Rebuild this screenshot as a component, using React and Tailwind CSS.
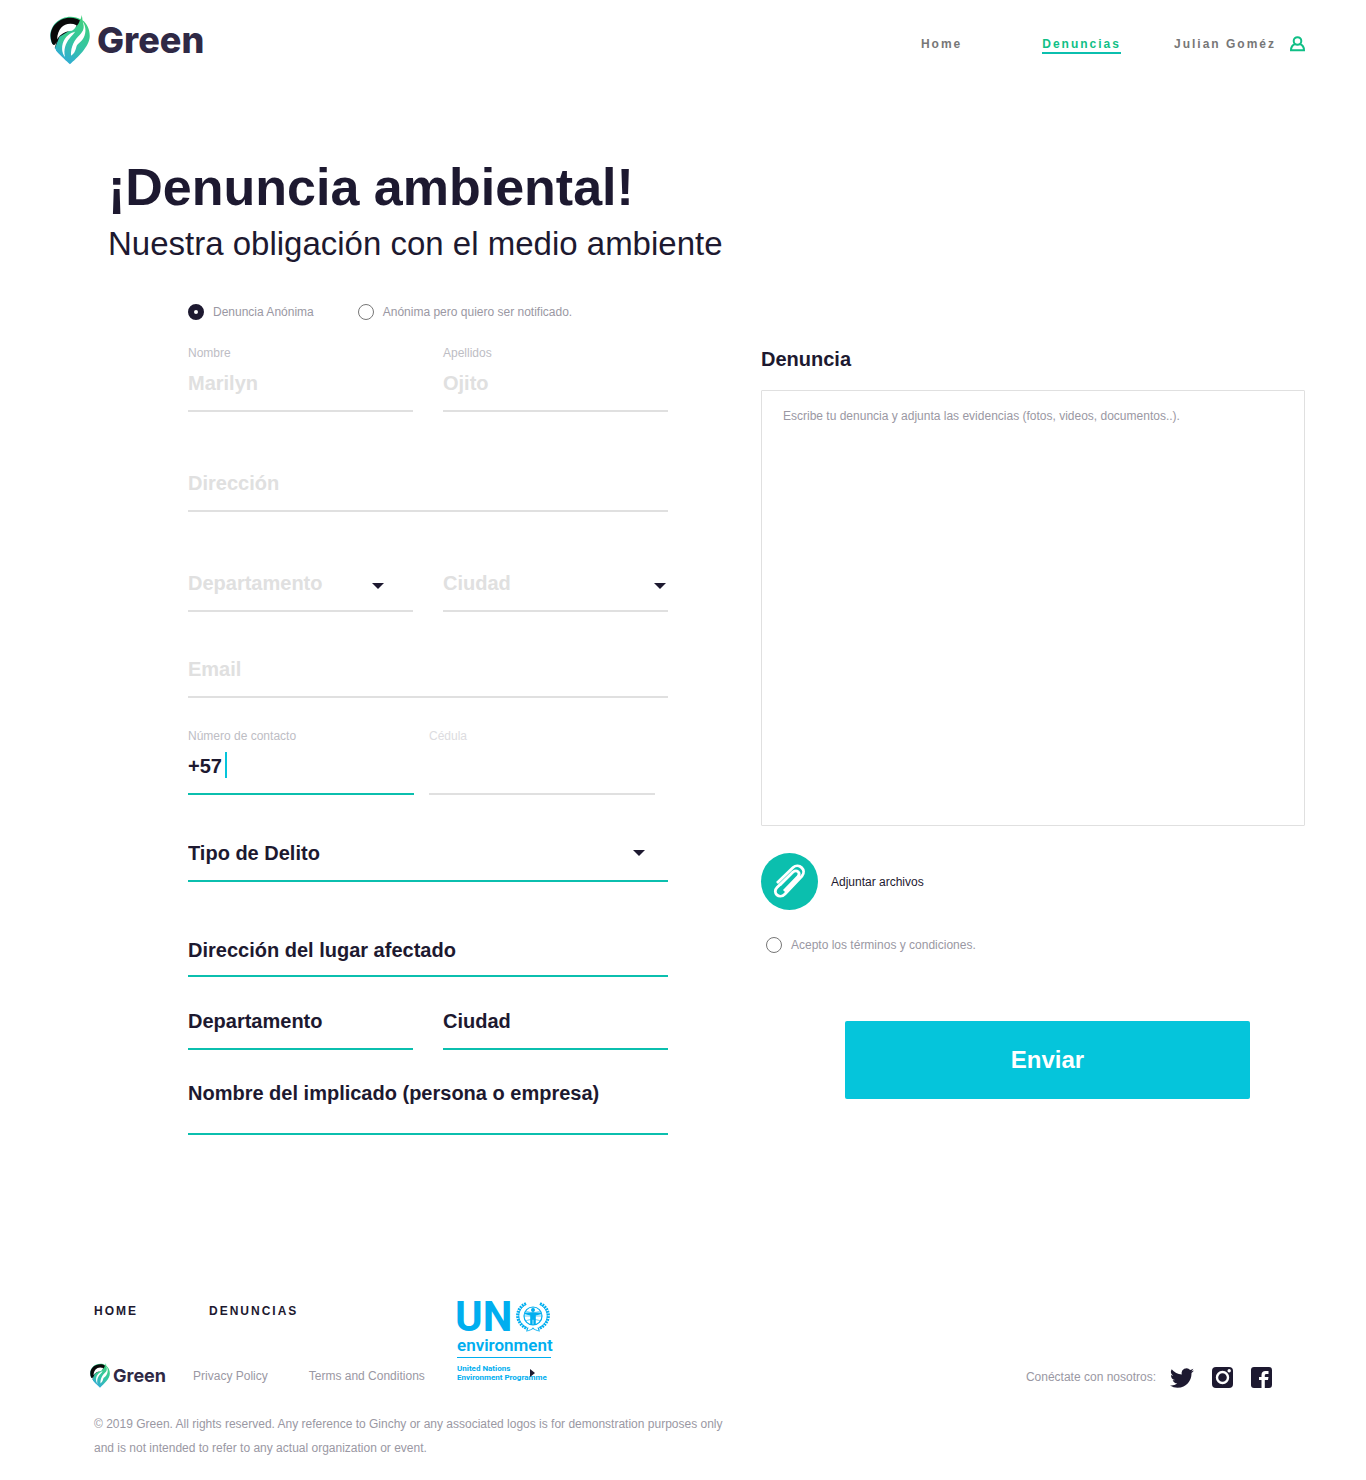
import React from "react";
import { useId } from "react";

const label = "text-xs leading-4";

function LeafPin({ className }) {
  const id = useId();
  return (
    <svg viewBox="12 8 120 152" className={className} aria-hidden="true">
      <defs>
        <linearGradient id={id} x1="0.8" y1="0" x2="0.3" y2="1">
          <stop offset="0" stopColor="#3fd07a" />
          <stop offset="0.5" stopColor="#35c6a0" />
          <stop offset="1" stopColor="#30a8dc" />
        </linearGradient>
      </defs>
      <path d="M72 158C50 138 12 104 12 72C12 38 40 13 74 13C86 13 96 16 104 21C106 17 107 12 107 8C109 14 110 19 110 24C124 34 132 52 132 72C132 104 94 138 72 158Z" fill={`url(#${id})`} />
      <path d="M26 110C18 98 13 86 13 72C13 39 41 16 74 16C85 16 94 19 102 24C100 32 96 38 90 44L40 74Z" fill="#080808" />
      <path d="M92 39C62 26 34 44 33 82C42 66 58 58 78 56C84 52 89 46 92 39Z" fill="#fff" />
      <path d="M28 106C36 86 48 68 74 60C56 74 46 92 46 112C46 120 48 126 50 136L30 118Z" fill={`url(#${id})`} />
      <path d="M8 84C14 96 22 102 27 98C30 94 33 86 34 82L25 110L40 132L8 120Z" fill="#fff" />
      <path d="M78 62C62 70 47 86 48 112C48 120 52 130 57 136C51 112 60 92 70 80C76 72 84 66 88 58C84 60 82 60 78 62Z" fill="#fff" />
      <path d="M110 27C118 46 112 58 102 68C86 84 74 102 75 132C93 120 88 106 95 98C106 88 118 78 119 56C119 44 116 34 110 27Z" fill="#fff" />
    </svg>
  );
}

function Caret({ className }) {
  return (
    <svg viewBox="0 0 12 6" className={`pointer-events-none absolute h-1.5 w-3 ${className}`} aria-hidden="true">
      <path d="M0 0H12L6 6Z" fill="#1d1930" />
    </svg>
  );
}

const tones = {
  muted: "border-[#e0e0e0] text-[#e0e0e0] placeholder:text-[#e0e0e0]",
  active: "border-[#0bbfae] text-[#1d1930] placeholder:text-[#1d1930]",
};
const sizes = {
  normal: "h-[51px] pb-[5px]",
  low: "h-[51px]",
  tall: "h-16 pb-[18px]",
};
const control = "block w-full border-b-2 bg-transparent text-xl font-bold outline-none placeholder:opacity-100";

function Field({ name, title, tone = "muted", size = "normal", titleClass = "text-[#bdbdc4]", children, ...rest }) {
  return (
    <div>
      {title && <label htmlFor={name} className={`block ${label} ${titleClass}`}>{title}</label>}
      <div className="relative">
        <input id={name} name={name} aria-label={title ? undefined : rest.placeholder} className={`${control} ${sizes[size]} ${tones[tone]}`} {...rest} />
        {children}
      </div>
    </div>
  );
}

function Select({ name, title, tone = "muted", caret }) {
  return (
    <div className="relative">
      <select id={name} name={name} aria-label={title} className={`${control} ${sizes.normal} appearance-none ${tones[tone]}`}>
        <option>{title}</option>
      </select>
      <Caret className={caret} />
    </div>
  );
}

const round = "h-4 w-4 shrink-0 appearance-none rounded-full border border-[#777] checked:border-[6px] checked:border-[#1d1930]";

function Emblem() {
  return (
    <svg viewBox="0 0 36 32" className="h-8 w-9" fill="none" stroke="#00aeef" aria-hidden="true">
      <circle cx="18" cy="15" r="9" strokeWidth="1.200" />
      <path d="M9 15H27M11 10C15 12 21 12 25 10M11 20C14 18 22 18 25 20M18 6V24" strokeWidth="0.600" />
      <circle cx="18" cy="9" r="2" fill="#00aeef" stroke="none" />
      <path d="M10 11.500L16 11.500H20L26 11.500V13.200L20.800 14.500V24H18.500V18.500H17.500V24H15.200V14.500L10 13.200Z" fill="#00aeef" stroke="none" />
      <path d="M11 2.500C-1 8 0 23 13 28M25 2.500C37 8 36 23 23 28" strokeWidth="3" strokeDasharray="1.800 0.900" />
      <path d="M10 4C1 10 2 22 12 27M26 4C35 10 34 22 24 27M11 30C14 30 17 28 19 27M25 30C22 30 19 28 17 27" strokeWidth="0.900" />
    </svg>
  );
}

export default function App() {
  return (
    <div className="bg-white font-['Liberation_Sans',Arial,sans-serif] text-[#1d1930]">
      <header className="flex items-start justify-between pt-[15px] pr-[61px] pl-[50px]">
        <a href="#inicio" className="flex items-center gap-[7px]">
          <LeafPin className="h-[50px] w-10" />
          <span className="font-['Inter',sans-serif] text-4xl font-extrabold text-[#2f2945]">Green</span>
        </a>
        <nav className="flex items-start pt-[21px] text-xs leading-4 font-bold tracking-[2px] text-[#777]">
          <a href="#inicio" className="mr-20">Home</a>
          <a href="#denuncias" className="mr-[53px] border-b-2 border-[#0bbfae] text-[#10bf86]">Denuncias</a>
          <a href="#perfil" className="flex items-center gap-3.5">
            Julian Goméz
            <svg viewBox="0 0 15 16" className="h-4 w-[15px]" fill="none" stroke="#10bf86" strokeWidth="2" aria-hidden="true">
              <circle cx="7.500" cy="5" r="3.800" />
              <path d="M5 8C2.500 9 1 11 1 14.300H14C14 11 12.500 9 10 8" />
            </svg>
          </a>
        </nav>
      </header>

      <main>
        <div className="pt-[92px] pl-[108px]">
          <h1 className="text-[52px] leading-[60px] font-bold">¡Denuncia ambiental!</h1>
          <p className="pt-[7px] text-[33px] leading-10">Nuestra obligación con el medio ambiente</p>
        </div>

        <form className="grid grid-cols-[480fr_544fr] gap-[93px] pt-10 pr-[61px] pl-[188px]">
          <div>
            <div className={`flex gap-11 ${label} text-[#9a98a3]`}>
              <label className="flex items-center gap-[9px]">
                <input type="radio" name="modo" defaultChecked className={round} />Denuncia Anónima
              </label>
              <label className="flex items-center gap-[9px]">
                <input type="radio" name="modo" className={round} />Anónima pero quiero ser notificado.
              </label>
            </div>
            <div className="grid grid-cols-2 gap-[30px] pt-[25px]">
              <Field name="nombre" title="Nombre" defaultValue="Marilyn" />
              <Field name="apellidos" title="Apellidos" defaultValue="Ojito" />
            </div>
            <div className="pt-[49px]">
              <Field name="direccion" placeholder="Dirección" />
            </div>
            <div className="grid grid-cols-2 gap-[30px] pt-[49px]">
              <Select name="departamento" title="Departamento" caret="top-[22px] right-[29px]" />
              <Select name="ciudad" title="Ciudad" caret="top-[22px] right-0.5" />
            </div>
            <div className="pt-[35px]">
              <Field name="email" type="email" placeholder="Email" />
            </div>
            <div className="grid grid-cols-2 gap-[15px] pt-[30px] pr-[13px]">
              <Field name="telefono" title="Número de contacto" tone="active" defaultValue="+57">
                <span className="absolute top-2 left-[37px] h-[26px] w-0.5 bg-[#05c5db]" />
              </Field>
              <Field name="cedula" title="Cédula" titleClass="text-[#dcdce0]" />
            </div>
            <div className="pt-9">
              <Select name="delito" title="Tipo de Delito" tone="active" caret="top-[19px] right-[23px]" />
            </div>
            <div className="pt-11">
              <Field name="lugar" tone="active" size="low" placeholder="Dirección del lugar afectado" />
            </div>
            <div className="grid grid-cols-2 gap-[30px] pt-[22px]">
              <Field name="departamento-lugar" tone="active" placeholder="Departamento" />
              <Field name="ciudad-lugar" tone="active" placeholder="Ciudad" />
            </div>
            <div className="pt-[21px]">
              <Field name="implicado" tone="active" size="tall" placeholder="Nombre del implicado (persona o empresa)" />
            </div>
          </div>

          <div className="pt-[43px]">
            <label htmlFor="denuncia" className="block text-xl leading-6 font-bold">Denuncia</label>
            <textarea id="denuncia" placeholder="Escribe tu denuncia y adjunta las evidencias (fotos, videos, documentos..)." className="mt-[19px] block h-[436px] w-full resize-none rounded-[1px] border border-[#e0e0e0] px-[21px] py-[17px] text-xs leading-4 outline-none placeholder:text-[#9a98a3] placeholder:opacity-100" />
            <button type="button" className="mt-[27px] flex items-center gap-[13px] text-xs leading-4">
              <span className="flex h-[57px] w-[57px] items-center justify-center rounded-full bg-[#0bbfae]">
                <svg viewBox="0 0 34 38" className="h-[38px] w-[34px]" fill="none" stroke="#fff" strokeWidth="2.800" aria-hidden="true">
                  <path d="M4 20L20 4.500C26 -0.500 34 7 29 13L12 31C6 37 -1 29.500 4 24.500L20 9C24 6 28 10 25 13.500L11 28M7 22L20 9" />
                </svg>
              </span>
              Adjuntar archivos
            </button>
            <label className={`ml-[5px] mt-[27px] flex items-center gap-[9px] ${label} text-[#9a98a3]`}>
              <input type="checkbox" className={round} />Acepto los términos y condiciones.
            </label>
            <div className="pt-[68px] pr-[55px] pl-[84px]">
              <button type="submit" className="h-[78px] w-full rounded-xs bg-[#05c5db] text-2xl font-bold text-white">Enviar</button>
            </div>
          </div>
        </form>
      </main>

      <footer className="pt-[166px] pr-[94px] pb-5 pl-[90px]">
        <div className="flex items-end justify-between">
          <div className="flex">
            <div className="flex w-[367px] flex-col justify-between pt-0.5">
              <nav className="flex gap-[71px] pl-1 text-xs leading-4 font-bold tracking-[2px]">
                <a href="#inicio">HOME</a>
                <a href="#denuncias">DENUNCIAS</a>
              </nav>
              <div className={`flex items-center ${label} text-[#9a98a3]`}>
                <a href="#inicio" className="mr-[27px] flex items-center gap-[3px]">
                  <LeafPin className="h-[25px] w-5" />
                  <span className="font-['Inter',sans-serif] text-lg leading-5 font-bold text-[#2f2945]">Green</span>
                </a>
                <a href="#privacidad" className="mr-[41px]">Privacy Policy</a>
                <a href="#terminos" className="whitespace-nowrap">Terms and Conditions</a>
              </div>
            </div>
            <div className="relative w-[94px] pb-1.5 font-['Roboto',sans-serif] text-[#00aeef]">
              <div className="flex items-center justify-between">
                <span className="-ml-0.5 text-[42px] leading-8 font-bold">UN</span>
                <Emblem />
              </div>
              <div className="border-b border-[#00aeef] text-[17px] leading-6 font-semibold">environment</div>
              <div className="pt-1.5 text-[8px] leading-[9px] font-bold whitespace-nowrap">United Nations<br />Environment Programme</div>
              <svg viewBox="0 0 5 8" className="absolute right-4 bottom-[11px] h-2 w-[5px]" aria-hidden="true">
                <path d="M0 0L5 4L0 8Z" fill="#1d1930" />
              </svg>
            </div>
          </div>
          <div className={`flex items-center ${label} text-[#9a98a3]`}>
            <span className="mr-3.5">Conéctate con nosotros:</span>
            <div className="flex items-center gap-[18px] pt-0.5">
              <a href="#twitter" aria-label="Twitter">
                <svg viewBox="0 2 24 20" className="h-5 w-6" fill="#1d1930"><path d="M24 4.600a10 10 0 0 1-2.800.8 5 5 0 0 0 2.100-2.700c-1 .6-2 1-3.100 1.200a4.900 4.900 0 0 0-8.400 4.500A14 14 0 0 1 1.700 3.200a4.900 4.900 0 0 0 1.500 6.500 4.900 4.900 0 0 1-2.200-.6v.1a4.900 4.900 0 0 0 3.900 4.800 5 5 0 0 1-2.200.1 4.900 4.900 0 0 0 4.600 3.400A9.900 9.900 0 0 1 0 19.500a14 14 0 0 0 7.500 2.200c9.100 0 14-7.500 14-14v-.6A10 10 0 0 0 24 4.600z" /></svg>
              </a>
              <a href="#instagram" aria-label="Instagram">
                <svg viewBox="0 0 21 21" className="h-[21px] w-[21px]"><rect width="21" height="21" rx="4" fill="#1d1930" /><circle cx="10.500" cy="10.500" r="5.500" fill="none" stroke="#fff" strokeWidth="2.400" /><circle cx="17.200" cy="3.800" r="1.700" fill="#fff" /></svg>
              </a>
              <a href="#facebook" aria-label="Facebook">
                <svg viewBox="0 0 21 21" className="h-[21px] w-[21px]"><rect width="21" height="21" rx="3" fill="#1d1930" /><path d="M10.500 21V13H8V10H10.500V8C10.500 5.200 12 4 14.500 4H17.500V7H15.500C14.300 7 13.800 7.500 13.800 8.500V10H17.500L17 13H13.800V21Z" fill="#fff" /></svg>
              </a>
            </div>
          </div>
        </div>
        <p className="max-w-[650px] pt-6 pl-1 text-xs leading-6 text-[#9a98a3]">
          © 2019 Green. All rights reserved. Any reference to Ginchy or any associated logos is for demonstration purposes only and is not intended to refer to any actual organization or event.
        </p>
      </footer>
    </div>
  );
}
